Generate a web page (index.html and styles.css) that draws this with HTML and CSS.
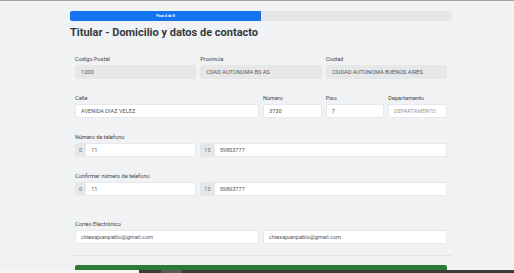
FILE: index.html
```html
<!DOCTYPE html>
<html lang="es">
<head>
    <meta charset="UTF-8">
    <meta name="viewport" content="width=device-width, initial-scale=1.0">
    <title>Titular - Domicilio y datos de contacto</title>
    <link rel="stylesheet" href="styles.css">
</head>
<body>
    <div class="container">
        <div class="progress-bar">
            <div class="progress" style="width: 50%;">Paso 4 de 8</div>
        </div>
        <h1>Titular - Domicilio y datos de contacto</h1>

        <form class="form">
            <div class="row">
                <div class="field span-4">
                    <label>Codigo Postal</label>
                    <input type="text" value="1200" disabled>
                </div>
                <div class="field span-4">
                    <label>Provincia</label>
                    <input type="text" value="CDAD AUTONOMA BS AS" disabled>
                </div>
                <div class="field span-4">
                    <label>Ciudad</label>
                    <input type="text" value="CIUDAD AUTONOMA BUENOS AIRES" disabled>
                </div>
            </div>

            <div class="row">
                <div class="field span-6">
                    <label>Calle</label>
                    <input type="text" value="AVENIDA DIAZ VELEZ">
                </div>
                <div class="field span-2">
                    <label>Numero</label>
                    <input type="text" value="3730">
                </div>
                <div class="field span-2">
                    <label>Piso</label>
                    <input type="text" value="7">
                </div>
                <div class="field span-2">
                    <label>Departamento</label>
                    <input type="text" placeholder="DEPARTAMENTO">
                </div>
            </div>

            <label class="row-label">Número de telefono</label>
            <div class="row">
                <div class="input-group span-4">
                    <span class="addon">0</span>
                    <input type="text" value="11">
                </div>
                <div class="input-group span-8">
                    <span class="addon">15</span>
                    <input type="text" value="59803777">
                </div>
            </div>

            <label class="row-label">Confirmar número de telefono</label>
            <div class="row">
                <div class="input-group span-4">
                    <span class="addon">0</span>
                    <input type="text" value="11">
                </div>
                <div class="input-group span-8">
                    <span class="addon">15</span>
                    <input type="text" value="59803777">
                </div>
            </div>

            <label class="row-label email-label">Correo Electrónico</label>
            <div class="row">
                <div class="field span-6">
                    <input type="text" value="chiesajuanpablo@gmail.com">
                </div>
                <div class="field span-6">
                    <input type="text" value="chiesajuanpablo@gmail.com">
                </div>
            </div>

            <hr>
            <button type="button" aria-label="Continuar"></button>
        </form>
    </div>
    <div class="taskbar"><span class="task"></span></div>
</body>
</html>
```

FILE: styles.css
```css
* {
    margin: 0;
    padding: 0;
    box-sizing: border-box;
    font-family: Roboto, 'Liberation Sans', sans-serif;
}

body {
    background: #f1f2f4;
    border-top: 1px solid #9ea2a7;
    color: #333;
    overflow: hidden;
    height: 273px;
}

.container {
    width: 382px;
    margin-left: 70px;
    padding-top: 10px;
}

.progress-bar {
    height: 10px;
    background: #e4e6e8;
    border-radius: 2px;
    overflow: hidden;
}

.progress {
    height: 100%;
    background: #1473f0;
    color: #fff;
    font-size: 3.5px;
    font-weight: bold;
    line-height: 10px;
    text-align: center;
}

h1 {
    font-size: 11px;
    font-weight: 700;
    color: #343a40;
    line-height: 16px;
    margin: 4px 0 14px;
}

.form {
    padding: 0 5px;
}

.row {
    display: grid;
    grid-template-columns: repeat(12, 1fr);
    gap: 4px;
    margin-bottom: 15px;
}

.span-2 { grid-column: span 2; }
.span-4 { grid-column: span 4; }
.span-6 { grid-column: span 6; }
.span-8 { grid-column: span 8; }

label {
    display: block;
    font-size: 5.6px;
    line-height: 8px;
    margin-bottom: 2px;
    color: #444;
}

/* collapses with the row margin above */
.email-label {
    margin-top: 24px;
}

input {
    display: block;
    width: 100%;
    height: 14px;
    border: 1px solid #e6e8ea;
    border-radius: 2px;
    background: #fff;
    padding: 0 5px;
    font-size: 5.6px;
    color: #555;
    outline: none;
}

input:disabled {
    background: #e6e7e9;
    border-color: #e6e7e9;
}

input::placeholder {
    color: #999;
    font-style: italic;
}

.input-group {
    display: flex;
    height: 14px;
}

.input-group input {
    flex: 1;
    border-radius: 0 2px 2px 0;
}

.addon {
    background: #e6e7e9;
    color: #777;
    font-size: 5.6px;
    line-height: 14px;
    padding: 0 3px 0 4px;
    border-radius: 2px 0 0 2px;
}

hr {
    border: none;
    border-top: 1px solid #e2e4e6;
    margin: -4px -5px 9px;
}

button {
    display: block;
    width: 100%;
    height: 20px;
    background: #2a7b34;
    border: none;
    border-radius: 2px;
}

.taskbar {
    position: fixed;
    left: 0;
    right: 0;
    bottom: 0;
    height: 3px;
    background: linear-gradient(90deg, #f4f5f6 139px, #3b3b3b 139px);
}

.task {
    display: block;
    width: 21px;
    height: 3px;
    margin-left: 161px;
    background: #5a5a5a;
}
```
